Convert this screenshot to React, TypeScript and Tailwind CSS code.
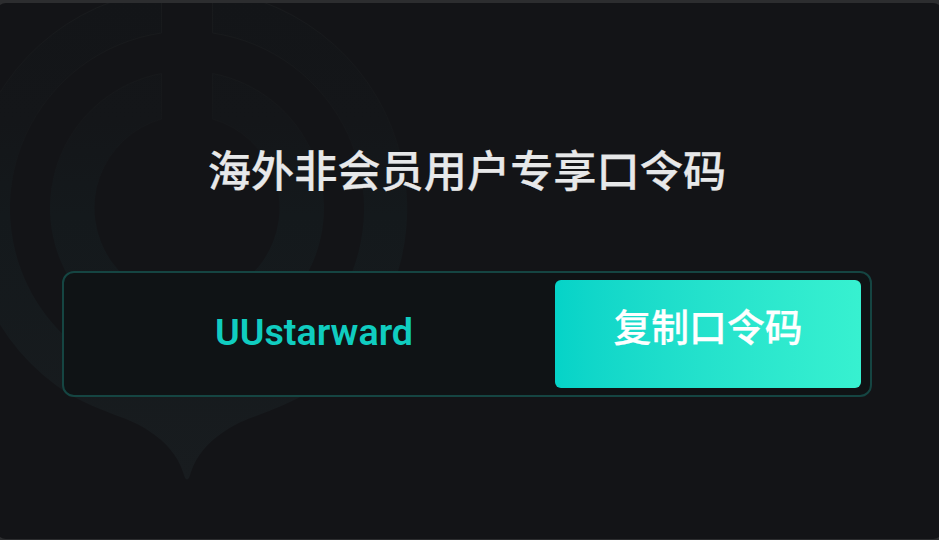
import { useState } from 'react';

const CODE = 'UUstarward';

// Faint pin-shaped logo behind the card content
function Watermark() {
    return (
        <svg className="absolute -top-[3px] left-1" width="939" height="540" viewBox="0 0 939 540" fill="none" aria-hidden="true">
            <defs>
                <linearGradient id="mark" x1="0" y1="0" x2="0" y2="480" gradientUnits="userSpaceOnUse">
                    <stop offset="0" stopColor="#131518" />
                    <stop offset="0.25" stopColor="#141619" />
                    <stop offset="0.45" stopColor="#14191c" />
                    <stop offset="1" stopColor="#181c1f" />
                </linearGradient>
                <linearGradient id="edge" x1="0" y1="0" x2="0" y2="200" gradientUnits="userSpaceOnUse">
                    <stop offset="0" stopColor="#191b1d" />
                    <stop offset="1" stopColor="#191b1d" stopOpacity="0" />
                </linearGradient>
            </defs>
            <g fill="url(#mark)" stroke="url(#edge)">
                <path
                    d="M161.5 -10A220 220 0 0 0 70 395C112 417 127 416 149 431C167 443 177 455 183 472Q187 487 191 472C197 455 207 443 225 431C247 416 262 417 304 395A220 220 0 0 0 212.5 -10V33A177 177 0 1 1 161.5 33Z"
                />
                <path d="M161.5 73.5A137 137 0 1 0 212.5 73.5V119A92.5 92.5 0 1 1 161.5 119Z" />
            </g>
        </svg>
    );
}

export default function App() {
    const [copied, setCopied] = useState(false);

    const handleCopy = () => {
        navigator.clipboard?.writeText(CODE);
        setCopied(true);
    };

    return (
        <div className="h-[540px] w-[939px] overflow-hidden bg-[#2c2d2f] pt-[3px] pb-px font-['Roboto','Noto_Sans_CJK_SC',sans-serif]">
            <main className="relative -mx-1 h-full overflow-hidden rounded-[10px] bg-[#131417]">
                <Watermark />
                <div className="relative flex flex-col pr-[71px] pl-[66px] pt-[138px]">
                    <h1 className="text-center text-[43.2px] leading-[64px] font-medium whitespace-nowrap text-[#e7e8e9] [-webkit-text-stroke:0.25px_#e7e8e9]">
                        海外非会员用户专享口令码
                    </h1>
                    <div className="mt-[66px] flex h-[126px] items-center justify-between rounded-xl border-2 border-[#154542] bg-[#0f1315] pr-[9px]">
                        <span className="flex-1 pb-0.5 pl-[9px] text-center text-[37.7px] leading-none font-semibold text-[#10cdc0]">
                            {CODE}
                        </span>
                        <button
                            onClick={handleCopy}
                            aria-pressed={copied}
                            className="h-[108px] w-[306px] cursor-pointer rounded-md bg-linear-to-r from-[#05d3c8] to-[#37f1d0] pb-2.5 text-[37.8px] leading-none font-medium text-white [-webkit-text-stroke:0.25px_white]"
                        >
                            复制口令码
                        </button>
                    </div>
                </div>
            </main>
        </div>
    );
}
